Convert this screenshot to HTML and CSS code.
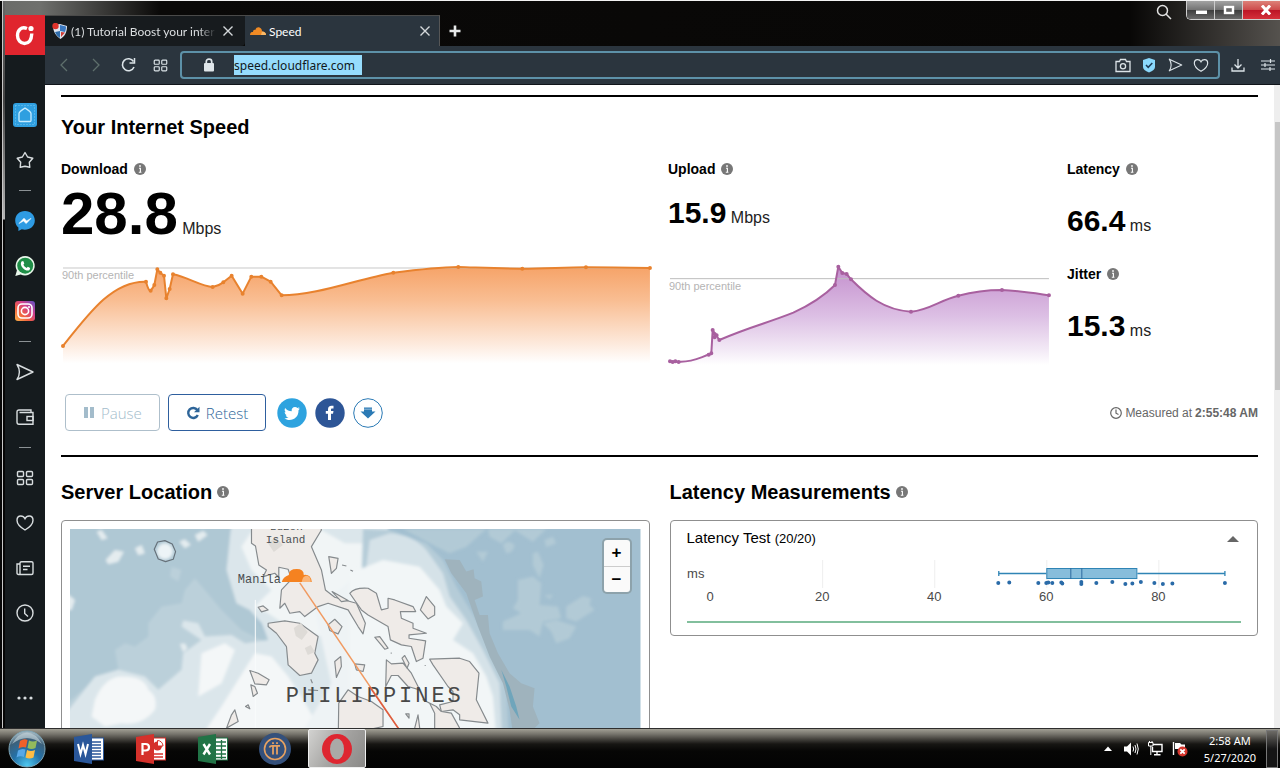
FILE: index.html
```html
<!DOCTYPE html>
<html lang="en">
<head>
<meta charset="utf-8">
<title>Speed</title>
<link rel="stylesheet" href="styles.css">
</head>
<body>
<svg class="defs" width="0" height="0" aria-hidden="true">
  <defs>
    <symbol id="info" viewBox="0 0 12 12"><circle cx="6" cy="6" r="6" fill="#777"/><path d="M5 5.200H6.400V9.500M4.800 9.200H7.400" stroke="#fff" stroke-width="1.100" fill="none"/><rect x="5.200" y="2.200" width="1.600" height="1.600" fill="#fff"/></symbol>
    <symbol id="x" viewBox="0 0 12 12"><path d="M1.500 1.500L10.500 10.500M10.500 1.500L1.500 10.500" stroke="currentColor" stroke-width="1.400" fill="none"/></symbol>
    <symbol id="grid" viewBox="0 0 18 18"><g fill="none" stroke="currentColor" stroke-width="1.400"><rect x="1.500" y="2.500" width="6" height="5" rx="1"/><rect x="10.500" y="2.500" width="6" height="5" rx="1"/><rect x="1.500" y="10.500" width="6" height="5" rx="1"/><rect x="10.500" y="10.500" width="6" height="5" rx="1"/></g></symbol>
    <symbol id="heart" viewBox="0 0 18 18"><path d="M9 16C7 14.800 1 10.800 1 6.200C1 3.600 2.600 2 4.800 2C6.800 2 8.200 3 9 4.600C9.800 3 11.200 2 13.200 2C15.400 2 17 3.600 17 6.200C17 10.800 11 14.800 9 16Z" fill="none" stroke="currentColor" stroke-width="1.400"/></symbol>
    <symbol id="send" viewBox="0 0 18 18"><path d="M1 1.500L17 9L1 16.500C4.200 11.500 4.200 6.500 1 1.500Z" fill="none" stroke="currentColor" stroke-width="1.400" stroke-linejoin="round"/></symbol>
    <linearGradient id="gDown" x1="0" y1="0" x2="0" y2="1"><stop offset="0" stop-color="#f6a368"/><stop offset=".35" stop-color="#f9be93"/><stop offset=".8" stop-color="#fdeadd"/><stop offset="1" stop-color="#fff"/></linearGradient>
    <linearGradient id="gUp" x1="0" y1="0" x2="0" y2="1"><stop offset="0" stop-color="#c48fcd"/><stop offset=".5" stop-color="#dcbfe4"/><stop offset=".85" stop-color="#f3eaf6"/><stop offset="1" stop-color="#fff"/></linearGradient>
    <linearGradient id="gInsta" x1="0" y1="1" x2="1" y2="0"><stop offset="0" stop-color="#fdb54a"/><stop offset=".35" stop-color="#f0603f"/><stop offset=".65" stop-color="#cf3f8d"/><stop offset="1" stop-color="#5b53c9"/></linearGradient>
    <radialGradient id="gOrb" cx=".5" cy=".95" r=".9"><stop offset="0" stop-color="#4ec8f0"/><stop offset=".45" stop-color="#2471a8"/><stop offset=".8" stop-color="#3d6079"/><stop offset="1" stop-color="#9db2bd"/></radialGradient>
    <filter id="depth" x="-5%" y="-5%" width="110%" height="110%"><feGaussianBlur stdDeviation="5"/></filter>
  </defs>
</svg>

<div class="window">
  <aside class="sidebar">
    <button class="brand" aria-label="Opera menu"><svg width="22" height="22" viewBox="0 0 22 22"><path d="M13 4.500C7 2 3.500 6.500 3.500 11.500C3.500 16 6.500 19.500 10.500 19.500C14.500 19.500 17.500 16.500 17.800 9.500" fill="none" stroke="#fff" stroke-width="3.400"/><circle cx="17" cy="4.500" r="2.600" fill="#fff"/></svg></button>
    <nav class="side-nav" aria-label="Sidebar">
      <button aria-label="Home"><svg width="24" height="24" viewBox="0 0 24 24"><rect width="24" height="24" rx="3" fill="#2f9fe0"/><path d="M6 17.500V10.500C6 8.500 10 6.500 12 5C14 6.500 18 8.500 18 10.500V17.500Q18 18.500 17 18.500H7Q6 18.500 6 17.500Z" fill="none" stroke="#c7ecff" stroke-width="1.300"/><g fill="none" stroke="#79c9f3" stroke-dasharray="1 2"><rect x="2.500" y="2.500" width="19" height="19"/></g></svg></button>
      <button aria-label="Bookmarks"><svg width="18" height="18" viewBox="0 0 18 18"><path d="M9 1.500L11.600 6L16.800 7.200L13.300 11.200L13.800 16.300L9 15.200L4.200 16.300L4.700 11.200L1.200 7.200L6.400 6Z" fill="none" stroke="currentColor" stroke-width="1.400" stroke-linejoin="round"/></svg></button>
      <hr>
      <button aria-label="Messenger"><svg width="20" height="20" viewBox="0 0 20 20"><path d="M10 0C4.300 0 .2 4 .2 9.500C.2 12.400 1.400 14.900 3.400 16.600V20L6.700 18.300C13.500 20 19.800 16 19.800 9.500C19.800 4 15.700 0 10 0Z" fill="#2e9be3"/><path d="M4 12.500L9 7.200L11.600 9.900L16 7.400L11.200 12.600L8.500 10Z" fill="#fff" stroke="#fff" stroke-width=".6"/></svg></button>
      <button aria-label="WhatsApp"><svg width="20" height="20" viewBox="0 0 20 20"><path d="M10.200 0A9.700 9.700 0 0 0 1.900 14.600L.3 20L5.700 18.400A9.700 9.700 0 1 0 10.200 0Z" fill="#e8f6ea"/><circle cx="10.200" cy="9.700" r="8" fill="#1f8e47"/><path d="M6.500 5.500L8.200 5L9.300 7.500L8.400 8.700C9.200 10.200 10.200 11.200 11.700 11.900L12.800 10.800L15.200 12L14.500 13.900C13 15.200 10 14.300 8 12.200C5.800 10 5.200 7.200 6.500 5.500Z" fill="#fff"/></svg></button>
      <button aria-label="Instagram"><svg width="20" height="20" viewBox="0 0 20 20"><rect width="20" height="20" rx="3" fill="url(#gInsta)"/><g fill="none" stroke="#fff" stroke-width="1.600"><rect x="3" y="3" width="14" height="14" rx="4"/><circle cx="10" cy="10" r="3.600"/></g><circle cx="14" cy="6" r="1" fill="#fff"/></svg></button>
      <hr>
      <button aria-label="My Flow"><svg width="18" height="18"><use href="#send"/></svg></button>
      <button aria-label="Wallet"><svg width="18" height="18" viewBox="0 0 18 18"><g fill="none" stroke="currentColor" stroke-width="1.400"><path d="M15 4V2H3Q1 2 1 4V14Q1 16.300 3 16.300H17V4.500H3.500"/><rect x="11" y="8.500" width="6" height="4"/></g></svg></button>
      <hr>
      <button aria-label="Speed Dial"><svg width="18" height="18"><use href="#grid"/></svg></button>
      <button aria-label="Favourites"><svg width="18" height="18"><use href="#heart"/></svg></button>
      <button aria-label="News"><svg width="18" height="18" viewBox="0 0 18 18"><g fill="none" stroke="currentColor" stroke-width="1.400"><path d="M4 15.500H15.500Q17 15.500 17 14V4Q17 2.700 15.500 2.700H5.500Q4 2.700 4 4V15.500H2.500Q1 15.500 1 14V5H3.500M7 7.200H14M7 10.500H11.500"/></g></svg></button>
      <button aria-label="History"><svg width="18" height="18" viewBox="0 0 18 18"><g fill="none" stroke="currentColor" stroke-width="1.400"><circle cx="9" cy="9" r="8"/><path d="M8.700 4.500V9.500L12 12.500"/></g></svg></button>
      <button class="more" aria-label="Sidebar setup"><svg width="18" height="4" viewBox="0 0 18 4"><g fill="currentColor"><circle cx="3" cy="2" r="1.600"/><circle cx="9" cy="2" r="1.600"/><circle cx="15" cy="2" r="1.600"/></g></svg></button>
    </nav>
  </aside>

  <div class="browser">
    <header class="tabstrip">
      <div class="tab">
        <svg width="16" height="16" viewBox="0 0 16 16"><path d="M1 2L8 1L15 3C15 9 13 13 8.500 16C4 13 1 9 1 2Z" fill="#dfe6f0"/><path d="M8 2L14 3.500C14 6 13.500 7.500 13 9L8 8Z" fill="#3a78c0"/><path d="M3 9L8 8V15C5.500 13.500 4 11.500 3 9Z" fill="#2e6cab"/><path d="M9 9L13 9.500L9 14Z" fill="#cf3b35"/><circle cx="3.500" cy="3" r="3.200" fill="#e0342c"/></svg>
        <a href="#tutorial">(1) Tutorial Boost your inter</a>
        <button aria-label="Close tab"><svg width="12" height="12"><use href="#x"/></svg></button>
      </div>
      <div class="tab active">
        <svg width="16" height="16" viewBox="0 0 16 16"><path d="M0 12C0 9.500 1.500 9 3 9C3 7 4.500 6.500 5.300 7C6 4.500 8 4 9.500 4.500C11.500 5 12 7 12 8.500C14.500 8.500 16 10 16 12Z" fill="#f08a24"/><path d="M12 8.500C14.500 8.500 16 10 16 12H11Z" fill="#f9b968"/></svg>
        <a href="#speed">Speed</a>
        <button aria-label="Close tab"><svg width="12" height="12"><use href="#x"/></svg></button>
      </div>
      <button class="new-tab" aria-label="New tab"><svg width="12" height="12" viewBox="0 0 12 12"><path d="M6 .5V11.500M.5 6H11.500" stroke="#e8eaea" stroke-width="2.600"/></svg></button>
      <button class="search-tabs" aria-label="Search tabs"><svg width="16" height="16" viewBox="0 0 16 16"><g fill="none" stroke="#e2e2e2" stroke-width="1.500"><circle cx="6.500" cy="6.500" r="5"/><path d="M10 10L15 15"/></g></svg></button>
      <div class="win-controls">
        <button aria-label="Minimize"><svg width="14" height="12" viewBox="0 0 14 12"><rect x="2" y="6.500" width="11" height="3.500" fill="#fff"/></svg></button>
        <button aria-label="Maximize"><svg width="12" height="10" viewBox="0 0 12 10"><rect x="2" y="2" width="8" height="6" fill="#666" stroke="#fff" stroke-width="2.400"/></svg></button>
        <button class="close" aria-label="Close"><svg width="12" height="10" viewBox="0 0 12 10"><path d="M2 .5L10 9.500M10 .5L2 9.500" stroke="#fff" stroke-width="3"/></svg></button>
      </div>
    </header>

    <div class="toolbar">
      <button class="dim" aria-label="Back"><svg width="14" height="14" viewBox="0 0 14 14"><path d="M10 1L4 7L10 13" fill="none" stroke="currentColor" stroke-width="1.300"/></svg></button>
      <button class="dim" aria-label="Forward"><svg width="14" height="14" viewBox="0 0 14 14"><path d="M4 1L10 7L4 13" fill="none" stroke="currentColor" stroke-width="1.300"/></svg></button>
      <button aria-label="Reload"><svg width="16" height="16" viewBox="0 0 16 16"><path d="M13.500 4.500A6 6 0 1 0 14 10" fill="none" stroke="currentColor" stroke-width="1.600"/><path d="M14.500 1V6H9.500" fill="none" stroke="currentColor" stroke-width="1.500"/></svg></button>
      <button aria-label="Speed Dial"><svg width="15" height="15"><use href="#grid"/></svg></button>
      <div class="address">
        <svg class="lock" width="12" height="14" viewBox="0 0 12 14"><rect x="1" y="5" width="10" height="8.500" rx="1" fill="#dfe6ea"/><path d="M3.300 6V3.500Q3.300 1.200 6 1.200Q8.700 1.200 8.700 3.500V6" fill="none" stroke="#dfe6ea" stroke-width="1.700"/></svg>
        <input type="text" aria-label="Address" value="speed.cloudflare.com">
        <span class="spacer"></span>
        <button aria-label="Snapshot"><svg width="16" height="15" viewBox="0 0 16 15"><g fill="none" stroke="currentColor" stroke-width="1.300"><path d="M1 3.500H4.500L5.500 1.500H10.500L11.500 3.500H15V13.500H1Z"/><circle cx="8" cy="8.200" r="2.600"/></g></svg></button>
        <button aria-label="Ad blocker"><svg width="14" height="16" viewBox="0 0 14 16"><path d="M7 1L13 3V10Q13 13 7 15.500Q1 13 1 10V3Z" fill="#8ad8fb"/><path d="M4 8L6.200 10.300L10.300 6" fill="none" stroke="#1d3a55" stroke-width="1.500"/></svg></button>
        <button aria-label="Send to My Flow"><svg width="15" height="14"><use href="#send"/></svg></button>
        <button aria-label="Bookmark"><svg width="16" height="15"><use href="#heart"/></svg></button>
      </div>
      <button class="downloads" aria-label="Downloads"><svg width="14" height="14" viewBox="0 0 14 14"><path d="M7 1V9.500M3.500 6.500L7 10L10.500 6.500M1 9.500V13H13V9.500" fill="none" stroke="currentColor" stroke-width="1.300"/></svg></button>
      <button class="setup" aria-label="Easy setup"><svg width="14" height="14" viewBox="0 0 14 14"><path d="M0 3H14M0 7H14M0 11H14M9.500 1V5M4 5V9M9 9V13" fill="none" stroke="currentColor" stroke-width="1.200"/></svg></button>
    </div>

    <div class="viewport">
      <main class="page">
        <section class="speed">
          <h2>Your Internet Speed</h2>
          <div class="metrics">
            <div class="metric">
              <h3>Download <svg width="12" height="12"><use href="#info"/></svg></h3>
              <p class="value big"><strong>28.8</strong> Mbps</p>
              <svg class="chart" viewBox="61 260 589 106" role="img" aria-label="Download speed">
                <g transform="translate(50 250) scale(.3333)">
                  <path d="M39 288C120 185 190 92 288 95Q296 125 302 122Q310 112 313 105L322 58L331 68L342 77L349 145L359 117L369 73C410 80 455 110 488 111C505 108 512 103 520 97L545 77L578 131L604 80H634L662 95L695 136C800 136 920 88 1030 68C1110 58 1160 52 1225 51C1290 53 1350 56 1417 56C1480 56 1550 52 1608 52C1680 52 1740 53 1800 54V340H39Z" fill="url(#gDown)"/>
                  <path d="M39 54H1800" stroke="#c8c8c8" stroke-width="3"/>
                  <path d="M39 288C120 185 190 92 288 95Q296 125 302 122Q310 112 313 105L322 58L331 68L342 77L349 145L359 117L369 73C410 80 455 110 488 111C505 108 512 103 520 97L545 77L578 131L604 80H634L662 95L695 136C800 136 920 88 1030 68C1110 58 1160 52 1225 51C1290 53 1350 56 1417 56C1480 56 1550 52 1608 52C1680 52 1740 53 1800 54" fill="none" stroke="#e8822e" stroke-width="6" stroke-linejoin="round"/>
                  <path d="M39 288h0M288 95h0M302 122h0M313 105h0M322 58h0M331 68h0M342 77h0M349 145h0M359 117h0M369 73h0M488 111h0M520 97h0M545 77h0M578 131h0M604 80h0M634 80h0M662 95h0M695 136h0M1030 68h0M1225 51h0M1417 56h0M1608 52h0M1800 54h0" stroke="#e8822e" stroke-width="12" stroke-linecap="round"/>
                </g>
                <text class="pct" x="62" y="279">90th percentile</text>
              </svg>
            </div>
            <div class="metric">
              <h3>Upload <svg width="12" height="12"><use href="#info"/></svg></h3>
              <p class="value"><strong>15.9</strong> Mbps</p>
              <svg class="chart" viewBox="668 260 381 106" role="img" aria-label="Upload speed">
                <g transform="translate(650 250) scale(.3333)">
                  <path d="M60 335H90C130 336 150 322 180 313L184 310L188 240L194 250L200 258L208 270C300 230 350 220 430 188C480 165 520 140 555 105L565 50L577 69L590 72L603 88C650 135 700 180 783 185C840 180 870 150 925 137C970 125 1010 120 1056 120C1110 122 1150 129 1197 136V345H60Z" fill="url(#gUp)"/>
                  <path d="M60 86H1197" stroke="#bdbdbd" stroke-width="3"/>
                  <path d="M60 335H90C130 336 150 322 180 313L184 310L188 240L194 250L200 258L208 270C300 230 350 220 430 188C480 165 520 140 555 105L565 50L577 69L590 72L603 88C650 135 700 180 783 185C840 180 870 150 925 137C970 125 1010 120 1056 120C1110 122 1150 129 1197 136" fill="none" stroke="#a8609f" stroke-width="6" stroke-linejoin="round"/>
                  <path d="M60 334h0M68 336h0M76 334h0M86 336h0M176 314h0M184 310h0M188 240h0M194 252h0M194 262h0M200 256h0M208 270h0M555 105h0M565 50h0M577 69h0M590 72h0M603 88h0M783 185h0M925 137h0M1056 120h0M1197 136h0" stroke="#a8609f" stroke-width="12" stroke-linecap="round"/>
                </g>
                <text class="pct" x="669" y="290">90th percentile</text>
              </svg>
            </div>
            <div class="metric side">
              <h3>Latency <svg width="12" height="12"><use href="#info"/></svg></h3>
              <p class="value"><strong>66.4</strong> ms</p>
              <h3>Jitter <svg width="12" height="12"><use href="#info"/></svg></h3>
              <p class="value"><strong>15.3</strong> ms</p>
            </div>
          </div>
          <div class="actions">
            <button class="btn" disabled><svg width="12" height="11" viewBox="0 0 12 11"><path d="M1 0H5V11H1ZM7 0H11V11H7Z" fill="currentColor"/></svg>Pause</button>
            <button class="btn"><svg width="14" height="14" viewBox="0 0 14 14"><path d="M11.300 4A5 5 0 1 0 11.800 9" fill="none" stroke="currentColor" stroke-width="2.400"/><path d="M13.500 .8V6.200H8Z" fill="currentColor"/></svg>Retest</button>
            <div class="share">
              <a href="#twitter" aria-label="Share on Twitter"><svg width="30" height="30" viewBox="0 0 30 30"><circle cx="15" cy="15" r="14.700" fill="#2ea3df"/><path d="M7.500 20.500C9.500 20.500 10.500 20 11.500 19.300C10 19.200 9 18.300 8.700 17.200H10C8.500 16.700 7.700 15.500 7.700 14L9 14.300C7.600 13.200 7.300 11.500 8.100 9.900C10 12 12 13 14.700 13.300C14.300 10.900 15.800 9 18 9C19 9 19.800 9.400 20.400 10L22.500 9.200L21.300 11L23 10.600L21.500 12.200C21.800 18 17.500 22 12.500 22C10.500 22 8.800 21.400 7.500 20.500Z" fill="#fff"/></svg></a>
              <a href="#facebook" aria-label="Share on Facebook"><svg width="30" height="30" viewBox="0 0 30 30"><circle cx="15" cy="15" r="14.700" fill="#2d5596"/><path d="M13 22V15.800H10.800V13H13V11.500C13 9 14.300 7.800 16.500 7.800H18.500V10.400H17.200C16.300 10.400 16 10.800 16 11.700V13H18.500L18 15.800H16V22Z" fill="#fff"/></svg></a>
              <a href="#download" aria-label="Download results"><svg width="30" height="30" viewBox="0 0 30 30"><circle cx="15" cy="15" r="14.300" fill="#fff" stroke="#2b7ab5"/><path d="M11 9.500H19V13.500H22.500L15 20.500L7.500 13.500H11Z" fill="#2b7ab5"/><path d="M11 11.200H19" stroke="#fff" stroke-width=".5"/></svg></a>
            </div>
            <p class="measured"><svg width="12" height="12" viewBox="0 0 12 12"><g fill="none" stroke="currentColor" stroke-width="1.200"><circle cx="6" cy="6" r="5.300"/><path d="M6 2.500V6.200L8.500 7.500"/></g></svg>Measured at <strong>2:55:48 AM</strong></p>
          </div>
        </section>

        <section class="details">
          <div>
            <h2>Server Location <svg width="12" height="12"><use href="#info"/></svg></h2>
            <div class="card map-card">
              <div class="map">
                <svg viewBox="70 529 571 240" role="img" aria-label="Map of the Philippines">
                  <rect x="70" y="529" width="571" height="240" fill="#a2bfd0"/>
                  <g transform="translate(55 510) scale(.3333)" filter="url(#depth)">
                    <path d="M25 37H520L590 300L640 390L560 400L440 500L25 620Z" fill="#afc8d4"/>
                    <path d="M350 170L380 180L370 215L345 200ZM420 205L450 240L500 300L560 360L630 395L560 400L480 500L25 720V590L130 500L190 480L180 420L210 400L240 410L280 380V340L320 290L380 280L390 240Z" fill="#bbd0da"/>
                    <path d="M25 620L120 500L190 480L270 500L310 540L380 480L385 430L440 390L380 350L385 332L430 340L450 380L530 375L570 400L640 390L620 340L585 300L545 280L515 180L530 37H1000V740H25Z" fill="#dbe6eb"/>
                    <path d="M120 570Q150 500 200 500Q270 500 280 540Q310 560 300 600Q260 650 200 640L150 650L110 620ZM440 430L510 400L540 420L500 520L430 560ZM400 740L500 590L600 430L650 440L700 500L740 560L840 740Z" fill="#f4f7f8"/>
                    <path d="M590 65L560 110L590 180L650 240L600 290L640 310L700 350L800 380L860 350L1000 400V100L870 100L800 60Z" fill="#f1f5f6"/>
                    <path d="M780 300L1000 120V740H700L830 520Z" fill="#eef3f5"/>
                    <path d="M125 65L140 60L158 85L140 90ZM152 150L180 120L207 125L190 155L160 163ZM240 115L260 105L270 130L250 136ZM373 95L390 88L408 104L390 115ZM420 75L445 62L458 75L430 95ZM375 402L390 400L398 415L385 428ZM35 250L60 270L50 300H35Z" fill="#e4ecef"/>
                    <circle cx="330" cy="124" r="24" fill="#edf4f7"/>
                  </g>
                  <path d="M255.500 600V728" stroke="#f9fbfc"/>
                  <g transform="translate(370 510) scale(.3333)" filter="url(#depth)">
                    <path d="M-20 57L60 60L170 100L220 150L260 230L320 330L370 430L410 520L420 740H-40Z" fill="#b5ccd8"/>
                    <path d="M0 90L60 70Q130 75 170 120L220 190L240 260L290 330L340 420L390 520L400 740H-40V400Z" fill="#d5e2e8"/>
                    <path d="M-60 190L40 150L150 170L210 240L230 290L280 340L250 390L310 430L350 500L370 560L385 740H-60Z" fill="#f2f6f7"/>
                  </g>
                  <g transform="translate(370 510) scale(.3333)">
                    <path d="M225 148L270 150L290 185L312 178L315 205L335 215L340 260L315 270L330 315H355L360 370L385 430L420 490L455 520L495 535L490 590L510 640L480 670H430L420 600L400 520L360 440L325 350L290 250L245 190Z" fill="#9fb3bd"/>
                    <path d="M395 480L420 530L440 590L450 630L425 590L410 530Z" fill="#6fa5bb"/>
                    <g filter="url(#depth)"><path d="M100 57H350L290 110L240 130L200 110ZM355 57H440L395 100L360 80ZM430 57H530L490 95ZM525 90L550 80L560 100L530 112ZM400 105Q415 85 435 105Q430 130 410 130ZM320 125H355L340 155ZM490 130L505 125L522 165L510 205L490 165ZM445 210L490 200L515 220L510 285L565 290L575 325L520 335L510 380L480 360L400 360V335L455 310L430 295L445 270ZM520 340L560 330L620 350L600 385L560 400L545 365ZM590 290L640 258L665 265L660 285L675 300L620 335L590 325ZM525 255H550L540 268Z" fill="#b2cad6"/></g>
                  </g>
                  <g transform="translate(55 510) scale(.3333)" fill="#efebe8" stroke="#858a8d" stroke-width="3.500" stroke-linejoin="round">
                    <path d="M590 40V100L602 108L612 165L635 180L625 200L660 190L672 202V172L700 178L710 208L680 240L675 295L690 280L705 310L735 305L750 320L790 290L820 280L880 300L910 350L925 372L932 340L905 280L840 262L812 240L800 180L770 110L800 60L795 40Z"/>
                    <path d="M640 340L690 333L735 340L790 380L780 430L790 450L770 490L735 497L700 465L695 410L665 370L640 350Z"/>
                    <path d="M820 345L840 328L862 350L850 372L825 362ZM822 140L850 145L845 175L830 190ZM832 245L880 272L860 275ZM862 165L875 168M887 180L895 184M610 292L625 288L640 300L620 306ZM585 482L610 490L643 510L635 525L600 522ZM588 525L600 530L608 550L595 560ZM540 600L550 635L515 655L530 615ZM572 590L580 585L585 597ZM840 455L858 440L860 470L845 503ZM900 462L930 465L925 485L905 480ZM768 508L773 520M760 540L790 542"/>
                    <path d="M850 720L852 580L880 540L910 560L950 575L985 600V650L940 660V720Z"/>
                    <path d="M298 118L308 96L330 92L352 102L362 125L355 148L332 155L310 147Z" fill="none" stroke="#66717a"/>
                  </g>
                  <g transform="translate(370 510) scale(.3333)" fill="#efebe8" stroke="#858a8d" stroke-width="3.500" stroke-linejoin="round">
                    <path d="M-60 250Q-45 232 -5 235L20 250L35 300L55 295L55 265L75 270L130 290L138 305L92 305L95 325L130 340V355L170 370L118 375V385L168 393L160 445L140 455L125 410L95 405L62 390L55 350L-5 315L-25 300Z"/>
                    <path d="M152 300L170 260L195 290V315L175 327ZM15 382L30 380L55 415L45 418ZM97 445L105 437L118 460L112 475ZM50 450L65 462L100 460L125 490L150 540L115 530L85 497H65L48 530Z"/>
                    <path d="M180 448L270 445L300 455L328 490L320 570L335 600L355 640L270 630V615L250 600L215 605L210 585L250 575V545L235 530L190 465Z"/>
                    <path d="M195 655V610L180 580L160 570L200 590L215 605L245 610L270 655M135 655L145 615L150 655M108 612L118 625V612ZM165 467h3M63 430h3"/>
                  </g>
                  <g fill="#dedbd7"><path d="M268 543l8-6 7 8-9 7zM294 628l7-5 7 9-6 8-6-4zM305 648l6-3 4 7-7 3z"/></g>
                  <g class="map-label"><text x="270" y="530">Luzon</text><text x="266" y="543">Island</text><text x="238" y="583" class="city">Manila</text></g>
                  <text x="286" y="702" class="country">PHILIPPINES</text>
                  <path d="M300 583L401 732" stroke="#f19a61" stroke-width="1.500"/><path d="M370 687L401 732" stroke="#dc5b42" stroke-width="1.500"/>
                  <path d="M282 582Q283 577 289 575Q289 569 297 569Q304 569 304 575Q311 574 312 582Z" fill="#f58220"/><path d="M302 582Q303 575 308 576Q311 577 311 582" fill="#fbb578"/>
                </svg>
                <div class="zoom"><button aria-label="Zoom in">+</button><button aria-label="Zoom out">−</button></div>
              </div>
            </div>
          </div>
          <div>
            <h2>Latency Measurements <svg width="12" height="12"><use href="#info"/></svg></h2>
            <div class="card latency-card">
              <button class="expander"><span>Latency Test <small>(20/20)</small></span><svg width="12" height="8" viewBox="0 0 12 8"><path d="M0 7L6 1L12 7Z" fill="#666"/></svg></button>
              <svg class="box" viewBox="687 556 554 50" role="img" aria-label="Latency distribution in milliseconds">
                <path d="M822.500 560V588M934.500 560V588M1046.500 560V588M1158.500 560V588" stroke="#eee"/>
                <text x="687" y="578">ms</text>
                <g text-anchor="middle"><text x="710" y="601">0</text><text x="822" y="601">20</text><text x="934" y="601">40</text><text x="1046" y="601">60</text><text x="1158" y="601">80</text></g>
                <path d="M998 573.500H1046M1137 573.500H1224.500M998.500 571V576M1224.500 571V576" stroke="#2f84b5" stroke-width="1.300"/>
                <rect x="1046.500" y="568.500" width="90" height="10" fill="#87bddb" stroke="#2f84b5"/>
                <path d="M1070.500 568V579M1081.500 568V579" stroke="#2c6aa0"/>
                <path d="M998 583h0M1009 582.500h0M1038 583h0M1046 583h0M1048 582.500h0M1052 583h0M1061 582.500h0M1062 583.500h0M1081 582h0M1081 584h0M1096 583h0M1112 582h0M1125 584h0M1132 583.500h0M1140.500 582h0M1154 583h0M1162.500 584h0M1172 583.500h0M1224.500 583h0" stroke="#2a6ba8" stroke-width="4" stroke-linecap="round"/>
              </svg>
              <div class="progress"></div>
            </div>
          </div>
        </section>
      </main>
      <div class="scrollbar" aria-hidden="true"><span></span></div>
    </div>
  </div>
</div>

<footer class="taskbar">
  <button class="start" aria-label="Start"><svg width="38" height="38" viewBox="0 0 38 38"><circle cx="19" cy="19" r="18" fill="url(#gOrb)" stroke="#7fa7b8"/><path d="M4 14Q19 2 34 14Q28 3 19 2.500Q10 3 4 14Z" fill="#c9d8dd" opacity=".6"/><path d="M12 11Q16 8 19.500 10L18 17.500Q14 16 10.500 18.500Z" fill="#f0602a"/><path d="M21 10.500Q25 12.500 29 10.500L27.500 18Q23.500 20 19.500 18Z" fill="#93bb5c"/><path d="M10 20.500Q14 18 17.500 19.500L16 27Q12 25.500 8.500 27.500Z" fill="#58a8e8"/><path d="M19 20Q23 22 27 20L25.500 27.500Q21.500 29.500 17.500 27.500Z" fill="#ffbd45"/></svg></button>
  <button aria-label="Word"><svg width="30" height="30" viewBox="0 0 30 30"><rect x="16" y="4" width="13.500" height="22" fill="#fff" stroke="#2a579a"/><path d="M18 8H27M18 11H27M18 14H27M18 17H27M18 20H27M18 23H27" stroke="#2a579a" stroke-width="1.300"/><path d="M0 3L18 0V30L0 27Z" fill="#2a579a"/><path d="M4 10L6.500 20L9 11L11.500 20L14 10" fill="none" stroke="#fff" stroke-width="2"/></svg></button>
  <button aria-label="PowerPoint"><svg width="30" height="30" viewBox="0 0 30 30"><rect x="16" y="4" width="13.500" height="22" fill="#fff" stroke="#d5312b"/><circle cx="21.500" cy="12" r="4.500" fill="#d5312b"/><path d="M21.500 12V6.500A5.500 5.500 0 0 1 27 12Z" fill="#fff" stroke="#d5312b"/><path d="M18 20H27M18 23H27" stroke="#d5312b" stroke-width="1.300"/><path d="M0 3L18 0V30L0 27Z" fill="#d5312b"/><path d="M6.500 21V10H9.500Q13 10 13 13.200Q13 16.500 9.500 16.500H6.500" fill="none" stroke="#fff" stroke-width="2.200"/></svg></button>
  <button aria-label="Excel"><svg width="30" height="30" viewBox="0 0 30 30"><rect x="16" y="4" width="13.500" height="22" fill="#fff" stroke="#217346"/><path d="M18 8H28M18 12H28M18 16H28M18 20H28M18 23.500H28M23.500 6V25" stroke="#217346" stroke-width="1.300"/><path d="M0 3L18 0V30L0 27Z" fill="#217346"/><path d="M5.500 10L12 20.500M12 10L5.500 20.500" stroke="#fff" stroke-width="2.400"/></svg></button>
  <button aria-label="Pi Network"><svg width="32" height="32" viewBox="0 0 32 32"><circle cx="16" cy="16" r="16" fill="#34507b"/><circle cx="16" cy="16" r="10.500" fill="none" stroke="#e6a161" stroke-width="1.600"/><path d="M10.500 14.500Q11 12.800 13 12.800H21M14 13V21.500M18 13V21.500M14 9.300V11M18 9.300V11" fill="none" stroke="#e6a161" stroke-width="1.800"/></svg></button>
  <button class="running" aria-label="Opera"><svg width="32" height="32" viewBox="0 0 32 32"><ellipse cx="16" cy="16" rx="15" ry="15" fill="#de2630"/><ellipse cx="16" cy="16" rx="7" ry="10.500" fill="#aaa9a7"/></svg></button>
  <div class="tray">
    <button aria-label="Show hidden icons"><svg width="8" height="5" viewBox="0 0 8 5"><path d="M0 5L4 .5L8 5Z" fill="#fff"/></svg></button>
    <button aria-label="Volume"><svg width="15" height="14" viewBox="0 0 15 14"><path d="M0 4.500H3L7 .5V13.500L3 9.500H0Z" fill="#fff"/><path d="M9 4.500Q10.300 7 9 9.500M11 3Q13 7 11 11M13 1.500Q15.500 7 13 12.500" fill="none" stroke="#fff"/></svg></button>
    <button aria-label="Network"><svg width="15" height="15" viewBox="0 0 15 15"><path d="M5 3.500H14V10.500H4.500V6M9 11V13.500M6 13.800H12.500" fill="none" stroke="#fff" stroke-width="1.400"/><path d="M.5 1.500H5V5H.5ZM1.500 0V2M4 0V2M2.800 5V14" fill="none" stroke="#fff"/></svg></button>
    <button aria-label="Action Center"><svg width="16" height="16" viewBox="0 0 16 16"><path d="M1.500 1V14" stroke="#fff" stroke-width="1.400"/><path d="M3 2H8L9.500 3.500H13V9H8L6.500 8H3Z" fill="#fff"/><circle cx="10.500" cy="10.500" r="5" fill="#d6352d"/><path d="M8.300 8.300L12.700 12.700M12.700 8.300L8.300 12.700" stroke="#fff" stroke-width="1.800"/></svg></button>
    <time class="clock">2:58 AM<br>5/27/2020</time>
    <button class="show-desktop" aria-label="Show desktop"></button>
  </div>
</footer>
</body>
</html>
```

FILE: styles.css
```css
* { box-sizing: border-box; }
body {
  margin: 0;
  height: 100vh;
  display: flex;
  flex-direction: column;
  overflow: hidden;
  background: #fff;
  color: #000;
  font-family: "Liberation Sans", Arial, sans-serif;
}
h2, h3, p { margin: 0; }
button {
  margin: 0;
  padding: 0;
  border: 0;
  background: none;
  color: inherit;
  font: inherit;
  display: flex;
  align-items: center;
  justify-content: center;
}
svg { display: block; flex: none; }
.defs { position: absolute; }

/* browser window */
.window {
  flex: 1;
  min-height: 0;
  display: flex;
  padding-left: 5px;
  border-top: 1px solid #f2f2f2;
  background:
    linear-gradient(90deg, #080808 0 2px, #c8c8c8 2px 3px, transparent 3px) 0 0 / 5px 100% no-repeat,
    linear-gradient(180deg, #666 0, #444 100px, #b5b5b5 218px, #050505 219px) 0 0 / 5px 100% no-repeat,
    linear-gradient(90deg, #6a6b68 0, #6f706d 40px, #0a0908 160px, #080706 1130px, #55524e 1280px);
}
.sidebar {
  width: 40px;
  margin-top: 14px;
  display: flex;
  flex-direction: column;
  background: #151b1e;
  color: #d8dddf;
}
.brand { height: 40px; background: #e0252e; }
.side-nav {
  flex: 1;
  display: flex;
  flex-direction: column;
  padding: 37px 0 8px;
}
.side-nav button { height: 45px; flex: none; }
.side-nav hr {
  width: 12px;
  height: 1px;
  margin: 8px auto 7px;
  border: 0;
  background: #8b9194;
}
.side-nav .more { margin-top: auto; }

.browser {
  flex: 1;
  min-width: 0;
  display: flex;
  flex-direction: column;
}
.tabstrip {
  height: 45px;
  display: flex;
  align-items: flex-end;
  color: #d5d9db;
}
.tab {
  width: 200px;
  height: 31px;
  display: flex;
  align-items: center;
  gap: 3px;
  padding: 0 11px 0 7px;
  background: #171b1e;
  border-top: 1px solid #4a4a49;
  border-radius: 0 0 4px 0;
}
.tab a {
  flex: 1;
  overflow: hidden;
  white-space: nowrap;
  color: #dcdfe1;
  text-decoration: none;
  font-family: Lato, "Noto Sans", sans-serif;
  font-size: 12px;
}
.tab:first-child a {
  margin-right: 3px;
  -webkit-mask-image: linear-gradient(90deg, #000 88%, transparent);
  mask-image: linear-gradient(90deg, #000 88%, transparent);
}
.tab.active {
  width: 195px;
  padding: 0 8px 0 5px;
  background: #2b353e;
  border-right: 1px solid #565656;
  border-radius: 0;
}
.tab.active a { color: #fff; }
.new-tab { width: 30px; height: 30px; }
.search-tabs {
  width: 44px;
  height: 22px;
  margin-left: auto;
  align-self: flex-start;
}
.win-controls {
  align-self: flex-start;
  display: flex;
  width: 94px;
  height: 19px;
  border: 1px solid #cfcfcf;
  border-width: 0 0 1px 1px;
  border-radius: 0 0 0 5px;
  overflow: hidden;
}
.win-controls button {
  width: 28px;
  border-right: 1px solid #ccc;
  background: linear-gradient(#a2a2a2, #727272 50%, #3c3c3c 50%, #6a6a6a);
}
.win-controls .close {
  flex: 1;
  padding-left: 8px;
  border: 0;
  background: linear-gradient(#dd8178, #cd4a4a 50%, #bb1425 50%, #d5303a);
}

.toolbar {
  height: 39px;
  flex: none;
  display: flex;
  align-items: center;
  padding-left: 3px;
  background: #2b353e;
  border-bottom: 1px solid #10151a;
  color: #dce4e8;
}
.toolbar button { width: 32px; height: 28px; }
.toolbar .dim { color: #5e6f6c; }
.toolbar .downloads { width: 36px; }
.toolbar .setup { width: 24px; }
.address {
  flex: 1;
  height: 28px;
  margin-left: 4px;
  display: flex;
  align-items: center;
  padding: 0 4px 0 21px;
  border: 2px solid #5d91a8;
  border-radius: 4px;
}
.address input {
  width: 128px;
  height: 20px;
  margin-left: 19px;
  padding: 0;
  border: 0;
  background: #96dcfd;
  color: #10181c;
  font-family: "Noto Sans", sans-serif;
  font-size: 12px;
}
.spacer { flex: 1; }
.toolbar .address button { width: 26px; height: 24px; }

/* page */
.viewport {
  flex: 1;
  min-height: 0;
  display: flex;
  background: #fff;
}
.page {
  flex: 1;
  min-width: 0;
  overflow: hidden;
  padding: 10px 16px 0;
}
.scrollbar {
  width: 6px;
  padding: 37px 0 0 1px;
  background: #eee;
}
.scrollbar span { display: block; height: 268px; background: #c6c6c6; }
section { border-top: 2px solid #000; }
h2 {
  display: flex;
  align-items: center;
  gap: 5px;
  font-size: 20px;
  line-height: 24px;
}
.speed { padding: 18px 0 24px; }
.metrics {
  display: grid;
  grid-template-columns: 589fr 381fr 191fr;
  column-gap: 18px;
  margin-top: 20px;
}
.metric { display: flex; flex-direction: column; }
h3 {
  display: flex;
  align-items: center;
  gap: 6px;
  font-size: 14px;
  line-height: 20px;
}
.value { margin-top: 16px; font-size: 16px; line-height: 20px; color: #222; }
.value strong { font-size: 30px; line-height: 36px; color: #000; }
.value.big { margin-top: 5px; }
.value.big strong { font-size: 60px; line-height: 60px; }
.side .value { margin: 24px 0 25px; }
.side .value:last-child { margin-bottom: 0; }
.chart { width: 100%; height: auto; margin-top: auto; overflow: visible; }
.metric:first-child .chart { margin-top: 16px; }
.pct { font-size: 11px; fill: #b4b4b4; }

.actions {
  display: flex;
  align-items: center;
  gap: 8px;
  margin-top: 28px;
  padding-left: 4px;
}
.btn {
  height: 37px;
  padding: 0 17px;
  gap: 6px;
  border: 1px solid #2e5f9e;
  border-radius: 4px;
  background: #fff;
  color: #2e6599;
  font-family: "Open Sans", sans-serif;
  font-weight: 300;
  font-size: 15px;
}
.btn:disabled { border-color: #aebfcb; color: #a3bccb; }
.share { display: flex; gap: 8px; margin-left: 3px; }
.measured {
  margin-left: auto;
  display: flex;
  align-items: center;
  gap: 3px;
  font-size: 12px;
  color: #666;
}

.details {
  display: grid;
  grid-template-columns: 1fr 1fr;
  column-gap: 20px;
  align-items: start;
  padding-top: 23px;
}
.card {
  margin-top: 16px;
  border: 1px solid #8f8f8f;
  border-radius: 4px;
}
.map-card { padding: 8px; }
.map { position: relative; }
.map svg { width: 100%; height: auto; }
.map text { fill: #4b4f52; font-family: "Liberation Mono", monospace; }
.map-label { font-size: 11px; }
.map .city { font-size: 12px; }
.map .country { font-size: 22px; letter-spacing: 3px; fill: #484848; }
.zoom {
  position: absolute;
  top: 11px;
  right: 11px;
  width: 26px;
  border-radius: 3px;
  background: #fafafa;
  box-shadow: 0 0 0 2px rgba(110, 120, 115, 0.4);
}
.zoom button {
  width: 26px;
  height: 26px;
  font-size: 17px;
  font-weight: bold;
}
.zoom button + button { border-top: 1px solid #ccc; }
.latency-card { padding: 7px 16px 12px; }
.expander { width: 100%; justify-content: space-between; font-size: 15px; line-height: 20px; }
.expander svg { margin-right: 2px; }
.expander small { font-size: 13px; }
.box { width: 100%; height: auto; margin-top: 7px; }
.box text { font-size: 13px; fill: #4a4a4a; }
.progress { height: 2px; margin-top: 15px; background: #82bf9d; }

/* taskbar */
.taskbar {
  height: 40px;
  flex: none;
  display: flex;
  gap: 4px;
  border-top: 1px solid #2e2e2e;
  background: linear-gradient(#a19f94 0, #77756d 5px, #46443f 10px, #171613 15px, #060605 22px, #030303);
  color: #fff;
}
.taskbar > button { width: 58px; }
.taskbar > .start { width: 54px; margin-right: 2px; }
.taskbar > .running {
  border: 1px solid #eee;
  border-radius: 2px;
  background: linear-gradient(120deg, #d2d2d0, #a5a4a2 50%, #8a8987);
}
.tray { margin-left: auto; display: flex; align-items: center; }
.tray button { width: 24px; height: 38px; }
.clock {
  margin: 0 10px 0 12px;
  text-align: center;
  font-family: "Noto Sans", sans-serif;
  font-size: 11px;
  line-height: 17px;
}
.tray .show-desktop {
  width: 12px;
  margin-right: 2px;
  border: 1px solid #777;
  background: linear-gradient(#6d6b66, #151515 50%);
}
```
